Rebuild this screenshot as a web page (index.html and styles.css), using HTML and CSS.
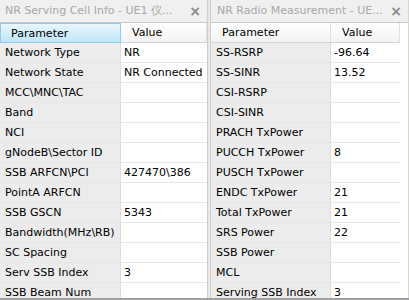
FILE: index.html
```html
<!DOCTYPE html>
<html lang="en">
<head>
    <meta charset="UTF-8">
    <title>NR Info</title>
    <link rel="stylesheet" href="styles.css">
</head>
<body>
    <div class="desk">
        <div class="panel left">
            <div class="titlebar">
                <span class="title">NR Serving Cell Info - UE1 仪...</span>
                <span class="close">×</span>
            </div>
            <div class="grid">
                <div class="hd sorted">Parameter</div><div class="hd">Value</div>
                <div class="k">Network Type</div><div class="v">NR</div>
                <div class="k">Network State</div><div class="v">NR Connected</div>
                <div class="k">MCC\MNC\TAC</div><div class="v"></div>
                <div class="k">Band</div><div class="v"></div>
                <div class="k">NCI</div><div class="v"></div>
                <div class="k">gNodeB\Sector ID</div><div class="v"></div>
                <div class="k">SSB ARFCN\PCI</div><div class="v">427470\386</div>
                <div class="k">PointA ARFCN</div><div class="v"></div>
                <div class="k">SSB GSCN</div><div class="v">5343</div>
                <div class="k">Bandwidth(MHz\RB)</div><div class="v"></div>
                <div class="k">SC Spacing</div><div class="v"></div>
                <div class="k">Serv SSB Index</div><div class="v">3</div>
                <div class="k">SSB Beam Num</div><div class="v"></div>
            </div>
        </div>
        <div class="split"></div>
        <div class="panel right">
            <div class="titlebar">
                <span class="title">NR Radio Measurement - UE...</span>
                <span class="close">×</span>
            </div>
            <div class="grid">
                <div class="hd">Parameter</div><div class="hd">Value</div>
                <div class="k">SS-RSRP</div><div class="v">-96.64</div>
                <div class="k">SS-SINR</div><div class="v">13.52</div>
                <div class="k">CSI-RSRP</div><div class="v"></div>
                <div class="k">CSI-SINR</div><div class="v"></div>
                <div class="k">PRACH TxPower</div><div class="v"></div>
                <div class="k">PUCCH TxPower</div><div class="v">8</div>
                <div class="k">PUSCH TxPower</div><div class="v"></div>
                <div class="k">ENDC TxPower</div><div class="v">21</div>
                <div class="k">Total TxPower</div><div class="v">21</div>
                <div class="k">SRS Power</div><div class="v">22</div>
                <div class="k">SSB Power</div><div class="v"></div>
                <div class="k">MCL</div><div class="v"></div>
                <div class="k">Serving SSB Index</div><div class="v">3</div>
            </div>
        </div>
    </div>
</body>
</html>
```

FILE: styles.css
```css
body {
    margin: 0;
    font-family: "DejaVu Sans", Tahoma, sans-serif;
    font-size: 11px;
    color: #000;
    background: #f0f0f0;
}
.desk {
    display: flex;
    width: 409px;
    height: 300px;
    overflow: hidden;
    border-bottom: 2px solid #a0a0a0;
    box-sizing: border-box;
}
.panel {
    display: flex;
    flex-direction: column;
    background: #f0f0f0;
}
.left {
    width: 207px;
}
.right {
    width: 198px;
    border-right: 1px solid #d8d8d0;
    box-sizing: border-box;
}
.split {
    width: 4px;
    background: #e8e8e8;
    border-left: 1px solid #cfcfcf;
    border-right: 1px solid #cfcfcf;
    box-sizing: border-box;
}
.titlebar {
    height: 22px;
    flex: none;
    display: flex;
    align-items: center;
    justify-content: space-between;
    padding: 0 6px 1px 5px;
    box-sizing: border-box;
    color: #a8a8a8;
    white-space: nowrap;
}
.title {
    overflow: hidden;
}
.right .titlebar {
    padding-left: 6px;
}
.close {
    color: #8a8a8a;
    font-size: 14px;
    font-weight: bold;
}
.grid {
    display: grid;
    grid-template-columns: 121px 1fr;
    grid-auto-rows: 20px;
    background: #fff;
    border-top: 1px solid #c8c8c8;
}
.right .grid {
    grid-template-columns: 120px 69px;
}
.hd {
    display: flex;
    align-items: center;
    padding-left: 11px;
    background: linear-gradient(#ffffff, #f3f3f3);
    border-right: 1px solid #e0e0e0;
    border-bottom: 1px solid #d5d5d5;
}
.hd.sorted {
    background: linear-gradient(#e9f6fd, #bfe6f9);
    border: 1px solid #95cbe8;
    padding-left: 10px;
}
.k, .v {
    display: flex;
    align-items: center;
    border-bottom: 1px solid #e6e6e6;
    white-space: nowrap;
}
.k {
    background: #ececec;
    padding-left: 5px;
    border-right: 1px solid #dcdcdc;
}
.v {
    padding-left: 3px;
}
```
